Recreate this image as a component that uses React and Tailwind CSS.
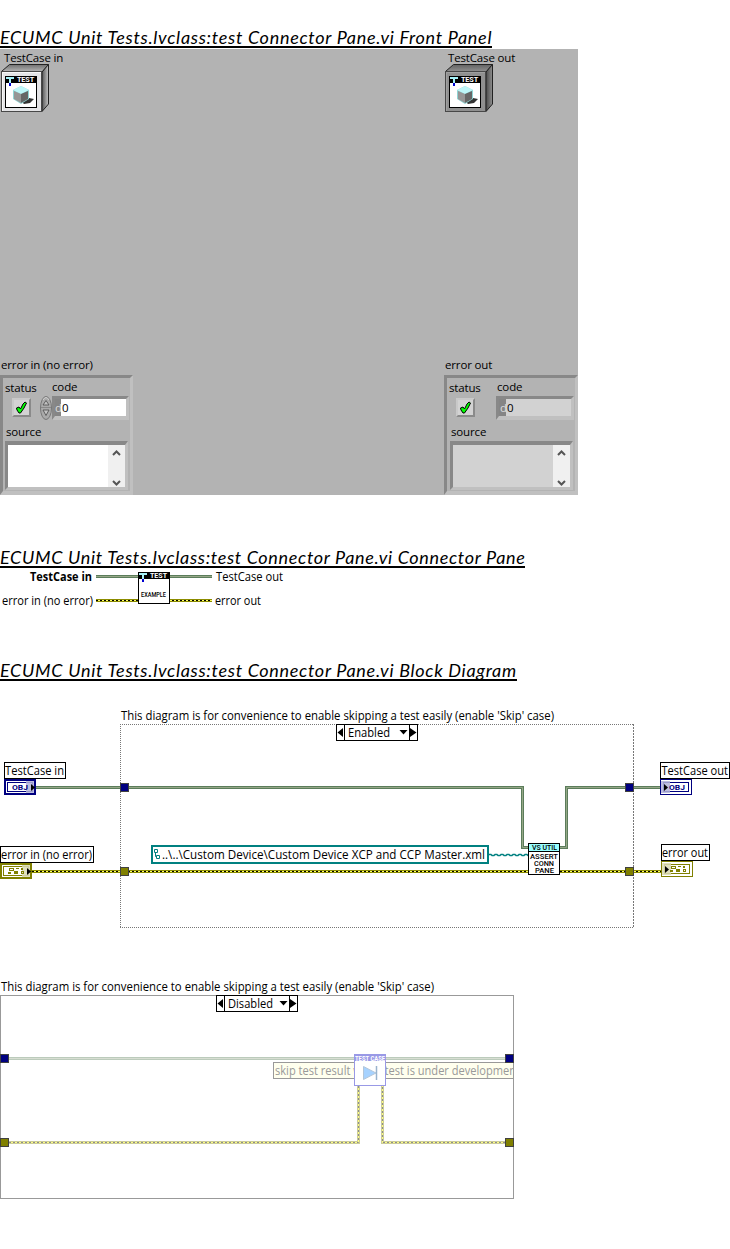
import React from "react";

const UI = "font-['Open_Sans','Noto_Sans',sans-serif]";

function Heading({ children, className }) {
  return (
    <h2 className={`h-[26px] border-b-2 border-black font-[Lato,sans-serif] text-[18px] italic leading-[24px] whitespace-nowrap text-black ${className}`}>
      {children}
    </h2>
  );
}

/* Text inside a diagram, fitted to the width of its label */
function Label({ x, y, w, children, size = 11.7, bold, fill = "#000" }) {
  return (
    <text x={x} y={y} textLength={w} lengthAdjust="spacingAndGlyphs" fontSize={size} fontWeight={bold ? 700 : 400} fill={fill} className={UI}>
      {children}
    </text>
  );
}

function Tiny({ x, y, w, children, fill = "#000", size = 8, bold }) {
  return (
    <text x={x} y={y} textLength={w} lengthAdjust="spacingAndGlyphs" fontSize={size} fontWeight={bold ? 700 : 500} fill={fill} className="font-['Roboto','Liberation_Sans',sans-serif]">
      {children}
    </text>
  );
}

function ObjectWire({ d, faded }) {
  return (
    <g fill="none">
      <path d={d} stroke={faded ? "#bccbbc" : "#5b7d5b"} strokeWidth="3" />
      <path d={d} stroke={faded ? "#d7ded2" : "#96a787"} strokeWidth="1" />
    </g>
  );
}

function ErrorWire({ d, faded }) {
  return (
    <g fill="none">
      <path d={d} stroke={faded ? "#cccc99" : "#8c8c00"} strokeWidth="3" />
      <path d={d} stroke={faded ? "#ffff80" : "#ffff66"} strokeWidth="1" />
      <path d={d} stroke={faded ? "#8c8c8c" : "#000"} strokeWidth="1" strokeDasharray="2 2" />
    </g>
  );
}

function Tunnel({ x, y, fill }) {
  return <rect x={x + 0.5} y={y + 0.5} width="8" height="8" fill={fill} stroke="#404040" />;
}

function Selector({ x, y, text, w }) {
  return (
    <g transform={`translate(${x} ${y})`}>
      <rect x="0.5" y="0.5" width="81" height="16" fill="#fff" stroke="#000" />
      <path d="M8.5 0V17M73.5 0V17" stroke="#000" />
      <path d="M7 4V13L1.5 8.5ZM74 4V13L80.5 8.5ZM63.5 6H71.5L67.5 10.5Z" fill="#000" />
      <Label x={12} y={13} w={w}>{text}</Label>
    </g>
  );
}

function TagBox({ x, y, w, text, tx, tw }) {
  return (
    <g>
      <rect x={x + 0.5} y={y + 0.5} width={w - 1} height="16" fill="#fff" stroke="#000" />
      <Label x={tx} y={y + 13} w={tw}>{text}</Label>
    </g>
  );
}

function ErrorGlyph({ x, y }) {
  return (
    <g transform={`translate(${x} ${y})`} fill="#808000" shapeRendering="crispEdges">
      <path d="M1 0h5v3H1zM2 1v1h3V1z" fillRule="evenodd" />
      <path d="M8 0h3v1H8zM13 0h2v2h-2zM0 4h3v2H0zM6 3h4v3H6z" />
      <path d="M13 3h3v3h-3zM14 4v1h1V4z" fillRule="evenodd" />
    </g>
  );
}

function Terminal({ x, y, kind, input }) {
  const c = kind === "obj" ? "#000080" : "#808000";
  const shade = kind === "obj" ? "#b3b3d9" : "#d9d9b3";
  return (
    <g transform={`translate(${x} ${y})`}>
      <rect width="32" height="16" fill={c} />
      {input ? (
        <rect x="2" y="2" width="28" height="12" fill="#fff" />
      ) : (
        <rect x="1" y="1" width="30" height="14" fill="#fff" />
      )}
      <rect x="3.5" y="3.5" width="25" height="9" fill="none" stroke={c} />
      <rect x={input ? 22 : 1} y="2" width={input ? 8 : 9} height="12" fill={shade} fillOpacity="0.85" />
      {kind === "obj" ? (
        <Tiny x={input ? 8 : 9} y={11} w={16} fill={c} bold>OBJ</Tiny>
      ) : (
        <ErrorGlyph x={input ? 8 : 9} y={5} />
      )}
      <path d={input ? "M27 5V12L31 8.5Z" : "M4 5V12L8 8.5Z"} fill="#000" />
    </g>
  );
}

function TestHeader() {
  return (
    <g shapeRendering="crispEdges">
      <rect width="32" height="7" fill="#000" />
      <path d="M1 1H9V3H6V7H4V3H1Z" fill="#a6f2f8" />
      <path d="M4 7H6V10H4Z" fill="#0000d0" />
      <Tiny x={12} y={6} w={17} size={7} fill="#fff" bold>TEST</Tiny>
    </g>
  );
}

function ClassCube({ id, dark }) {
  return (
    <svg width="48" height="48" viewBox="0 0 48 48" className="block">
      <defs>
        <linearGradient id={`${id}-top`} x1="0" x2="0" y1="0" y2="1">
          <stop offset="0" stopColor={dark ? "#626262" : "#707070"} />
          <stop offset="1" stopColor={dark ? "#909090" : "#b4b4b4"} />
        </linearGradient>
        <linearGradient id={`${id}-side`} x1="0" x2="1" y1="0" y2="0">
          <stop offset="0" stopColor={dark ? "#4a4a4a" : "#565656"} />
          <stop offset="1" stopColor={dark ? "#909090" : "#c4c4c4"} />
        </linearGradient>
      </defs>
      <path d="M0.5 7.5L8.5 0.5H47.5L41.5 7.5Z" fill={`url(#${id}-top)`} stroke="#222" />
      <path d="M41 8L47.5 0.5V40L41 47.5Z" fill={`url(#${id}-side)`} stroke="#222" />
      <rect x="0.5" y="7.5" width="40" height="40" fill={dark ? "#909090" : "#e4e4e6"} stroke="#484848" />
      <path d="M1.5 47V8.5H40" fill="none" stroke={dark ? "#a0a0a0" : "#f8f8f8"} />
      <g transform="translate(4 12)">
        <rect x="0.5" y="0.5" width="31" height="31" fill="#fff" stroke="#000" />
        <TestHeader />
        <path d="M17 26L24 22L29 23L25 27L19 28Z" fill="#333" />
        <path d="M8 14L16 10L24 14V23L16 28L8 23Z" fill="#8fd4d4" />
        <path d="M8 14L16 10L24 14L16 18Z" fill="#bdf6f8" />
        <path d="M9 15L16 18V27L9 23Z" fill="#969696" />
        <path d="M16 18L23 15V23L16 27Z" fill="#666" />
      </g>
    </svg>
  );
}

function CheckButton() {
  return (
    <div className="flex h-[19px] w-[19px] items-center justify-center border-2 border-t-[#c9c9c9] border-r-[#8a8a8a] border-b-[#8a8a8a] border-l-[#c9c9c9] bg-[#d3d3d3]">
      <svg width="13" height="13" viewBox="0 0 13 13">
        <path d="M1.5 7L4 6L5.500 8L8 3L10 1L11.500 2L9 7L5.500 12L4 12L2 9Z" fill="#00ff00" stroke="#000" strokeWidth="1" />
      </svg>
    </div>
  );
}

function Spinner() {
  return (
    <svg width="12" height="26" viewBox="0 0 12 26" className="shrink-0">
      <ellipse cx="6" cy="13" rx="5.5" ry="11.5" fill="#aaa" stroke="#777" />
      <path d="M3 5Q6 0 9 5" fill="none" stroke="#d0d0d0" />
      <path d="M1 12.5H11" stroke="#888" />
      <path d="M6 5.5L9 10H3ZM6 20.5L9 15H3Z" fill="#c4c4c4" stroke="#555" strokeWidth="0.9" />
    </svg>
  );
}

const BEVEL = "border-t-[#888888] border-l-[#888888] border-r-[#c0c0c0] border-b-[#c0c0c0]";

function ErrorCluster({ title, output }) {
  const field = output ? "bg-[#d2d2d2]" : "bg-white";
  return (
    <section className={`${output ? "w-[134px]" : "w-[133px]"} ${UI} text-[11.5px] leading-[16px] tracking-[-0.15px] text-black`}>
      <div className="h-[18px] pl-px whitespace-nowrap">{title}</div>
      <div className={`flex h-[120px] flex-col border-[3px] border-b-4 ${BEVEL} ${output ? "pl-[3px]" : "pl-[2px]"}`}>
        <div className="flex h-[17px] items-start">
          <span className={`mt-[2px] ${output ? "-ml-px w-[48px]" : "w-[47px]"}`}>status</span>
          <span className="mt-px">code</span>
        </div>
        <div className="flex h-[26px] items-center">
          <div className={`-mt-px shrink-0 ${output ? "w-[40px] pl-[6px] mr-[6px]" : "w-[35px] pl-[7px]"}`}><CheckButton /></div>
          {!output && <Spinner />}
          <div className={`flex h-[24px] shrink-0 ${output ? "w-[78px]" : "w-[77px]"} border-[3px] border-b-4 ${BEVEL}`}>
            <span className={`shrink-0 overflow-visible bg-[#858585] leading-[17px] text-[#ddd] ${output ? "w-[7px] pl-px" : "w-[6px]"}`}>d</span>
            <span className={`grow pl-px leading-[17px] ${field}`}>0</span>
          </div>
        </div>
        <div className="h-[20px] pl-px leading-[22px]">source</div>
        <div className={`flex h-[49px] w-[123px] justify-end border-[3px] border-t-[4px] ${BEVEL} ${field}`}>
          <div className="flex h-full w-[17px] flex-col items-center justify-between bg-[#f0f0f0] pt-[5px] pb-px">
            <svg width="9" height="6" viewBox="0 0 9 6"><path d="M1 5L4.500 1.500L8 5" fill="none" stroke="#555" strokeWidth="2" /></svg>
            <svg width="9" height="6" viewBox="0 0 9 6"><path d="M1 1L4.500 4.500L8 1" fill="none" stroke="#555" strokeWidth="2" /></svg>
          </div>
        </div>
      </div>
    </section>
  );
}

function FrontPanel() {
  return (
    <div className="mt-px flex h-[446px] w-[578px] flex-col justify-between bg-[#b3b3b3]">
      <div className={`flex ${UI} text-[11.5px] leading-[15px] tracking-[-0.15px] text-black`}>
        <div className="w-[444px] pl-px pt-px">
          <div className="h-[14px] pl-[3px]">TestCase in</div>
          <ClassCube id="in" />
        </div>
        <div className="pl-px pt-px">
          <div className="h-[14px] pl-[3px]">TestCase out</div>
          <ClassCube id="out" dark />
        </div>
      </div>
      <div className="flex justify-between">
        <ErrorCluster title="error in (no error)" />
        <ErrorCluster title="error out" output />
      </div>
    </div>
  );
}

function ConnectorPane() {
  return (
    <svg width="730" height="87" viewBox="0 568 730 87" className="block shrink-0">
      <Label x={30} y={581} w={62} bold>TestCase in</Label>
      <Label x={2} y={605} w={91}>error in (no error)</Label>
      <ObjectWire d="M96 576.5H212" />
      <ErrorWire d="M96 600.5H212" />
      <rect x="138.500" y="572.500" width="31" height="31" fill="#fff" stroke="#000" />
      <g transform="translate(138 572)"><TestHeader /></g>
      <Tiny x={141} y={597} w={25} size={8}>EXAMPLE</Tiny>
      <Label x={216} y={581} w={67}>TestCase out</Label>
      <Label x={215} y={605} w={46}>error out</Label>
    </svg>
  );
}

const CAPTION = "This diagram is for convenience to enable skipping a test easily (enable 'Skip' case)";

function EnabledDiagram() {
  return (
    <svg width="730" height="265" viewBox="0 681 730 265" className="block shrink-0">
      <Label x={121} y={720} w={433}>{CAPTION}</Label>
      <g stroke="#777" fill="none">
        <path d="M120 724.500H634M120 927.500H634" strokeDasharray="1 1" />
        <path d="M120.500 724V928" strokeDasharray="1 1" />
        <path d="M633.500 724V928" strokeDasharray="2 1" />
      </g>
      <Selector x={336} y={724} text="Enabled" w={42} />
      <ObjectWire d="M36 787.500H522.500V847.500H528" />
      <ObjectWire d="M560 847.500H566.500V787.500H660" />
      <ErrorWire d="M32 871.500H661" />
      <Tunnel x={120} y={783} fill="#000080" />
      <Tunnel x={625} y={783} fill="#000080" />
      <Tunnel x={120} y={867} fill="#808000" />
      <Tunnel x={625} y={867} fill="#808000" />
      <TagBox x={4} y={762} w={62} text="TestCase in" tx={5} tw={59} />
      <Terminal x={4} y={779} kind="obj" input />
      <TagBox x={0} y={846} w={94} text="error in (no error)" tx={1} tw={91} />
      <Terminal x={0} y={863} kind="err" input />
      <rect x="152" y="846" width="336" height="17" fill="#fff" stroke="#008080" strokeWidth="2" />
      <path d="M154.500 849.500h3v3h-3zM156.500 855.500h3v3h-3zM155.500 853v3.500h1" fill="none" stroke="#008080" />
      <Label x={162} y={859} w={323}>..\..\Custom Device\Custom Device XCP and CCP Master.xml</Label>
      <path d="M489 854.500h2l1 1h2l1-1h2l1 1h2l1-1h2l1 1h2l1-1h2l1 1h2l1-1h2l1 1h2l1-1h2l1 1h2l1-1h2l1 1h2" fill="none" stroke="#008080" strokeWidth="1.400" />
      <rect x="528.500" y="843.500" width="31" height="31" fill="#fff" stroke="#000" />
      <rect x="529" y="844" width="30" height="7" fill="#99ffff" />
      <path d="M528 851.500H560" stroke="#000" />
      <Tiny x={532} y={850} w={25} size={8}>VS UTIL</Tiny>
      <Tiny x={530} y={859} w={28} size={8}>ASSERT</Tiny>
      <Tiny x={534} y={866} w={20} size={8}>CONN</Tiny>
      <Tiny x={535} y={873} w={19} size={8}>PANE</Tiny>
      <TagBox x={660} y={762} w={70} text="TestCase out" tx={661.5} tw={66.5} />
      <Terminal x={660} y={779} kind="obj" />
      <TagBox x={661} y={844} w={49} text="error out" tx={662} tw={46} />
      <Terminal x={661} y={861} kind="err" />
    </svg>
  );
}

function DisabledDiagram() {
  return (
    <svg width="730" height="303" viewBox="0 946 730 303" className="block shrink-0">
      <defs><clipPath id="frame"><rect x="0" y="995" width="513" height="204" /></clipPath></defs>
      <Label x={1} y={991} w={433}>{CAPTION}</Label>
      <ObjectWire d="M9 1058.500H505" faded />
      <g clipPath="url(#frame)">
        <rect x="273.500" y="1062.500" width="250" height="16" fill="#ffffee" stroke="#999" />
        <Label x={275} y={1075} w={245} fill="#999999">skip test result when test is under development</Label>
      </g>
      <ErrorWire d="M9 1142.500H358.500V1086" faded />
      <ErrorWire d="M505 1142.500H382.500V1086" faded />
      <rect x="354.500" y="1054.500" width="31" height="31" fill="#fff" stroke="#9999e6" />
      <rect x="354" y="1054" width="32" height="7" fill="#9999e6" />
      <Tiny x={355} y={1060.500} w={30} size={8} fill="#fff" bold>TEST CASE</Tiny>
      <path d="M363.500 1066.500V1079.500L376 1073Z" fill="#a6d2ff" stroke="#b3c6d9" />
      <path d="M376.500 1066V1080" stroke="#99b3cc" strokeWidth="1.500" />
      <rect x="0.500" y="995.500" width="513" height="203" fill="none" stroke="#999" />
      <Selector x={216} y={995} text="Disabled" w={45} />
      <Tunnel x={0} y={1054} fill="#000080" />
      <Tunnel x={505} y={1054} fill="#000080" />
      <Tunnel x={0} y={1138} fill="#808000" />
      <Tunnel x={505} y={1138} fill="#808000" />
    </svg>
  );
}

export default function App() {
  return (
    <main className="flex h-[1249px] w-[730px] flex-col overflow-hidden bg-white pt-[22px]">
      <Heading className="w-[492px] shrink-0 pt-[3px] tracking-[0.71px]">ECUMC Unit Tests.lvclass:test Connector Pane.vi Front Panel</Heading>
      <FrontPanel />
      <Heading className="mt-[47px] w-[525px] shrink-0 pt-[3px] tracking-[0.67px]">ECUMC Unit Tests.lvclass:test Connector Pane.vi Connector Pane</Heading>
      <ConnectorPane />
      <Heading className="w-[517px] shrink-0 pt-[3px] tracking-[0.7px]">ECUMC Unit Tests.lvclass:test Connector Pane.vi Block Diagram</Heading>
      <EnabledDiagram />
      <DisabledDiagram />
    </main>
  );
}
